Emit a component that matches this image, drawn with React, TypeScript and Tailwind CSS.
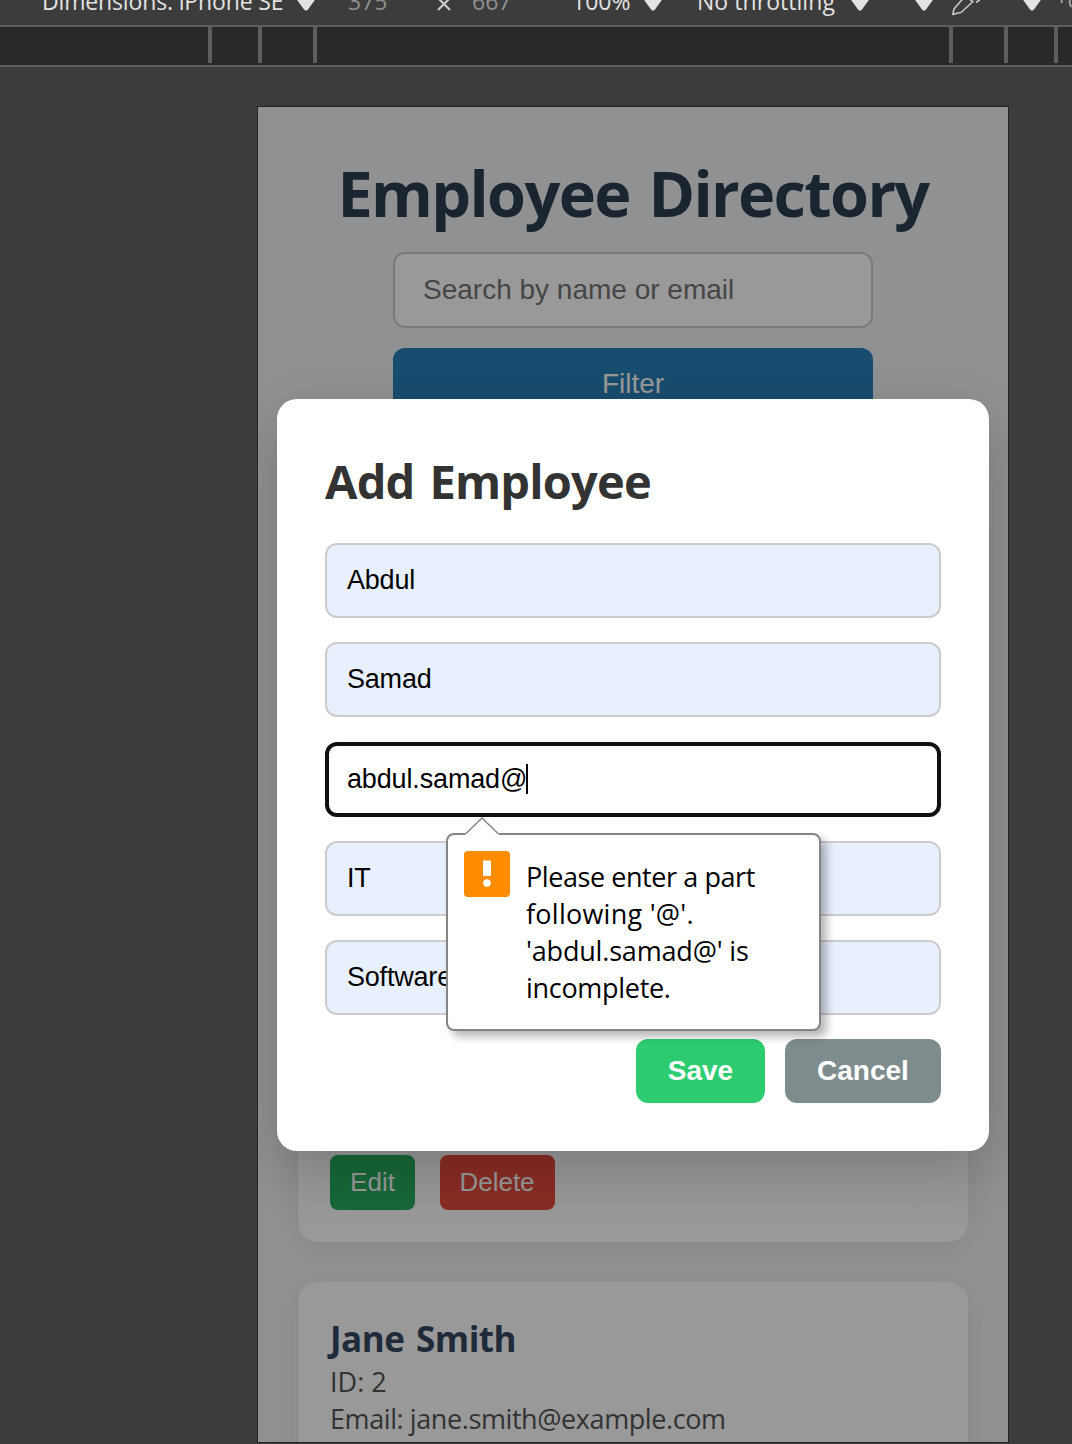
import React from "react";

function Caret({ className = "" }: { className?: string }) {
  return (
    <svg viewBox="0 0 22 14" className={`mt-2 h-[14px] w-[22px] shrink-0 fill-[#e3e3e3] ${className}`}>
      <path d="M0 0H22L13 12.600Q11 14.800 9 12.600Z" />
    </svg>
  );
}

function DeviceToolbar() {
  return (
    <div className="h-[25px] overflow-hidden bg-[#3c3c3c]">
      <div className="-mt-6 flex h-12 items-center text-[23px] leading-[48px] whitespace-nowrap text-[#e3e3e3]">
        <span className="ml-[42px] w-[253px] shrink-0 pt-px tracking-[-0.15px]">Dimensions: iPhone SE</span>
        <Caret />
        <span className="ml-[31px] w-[89px] shrink-0 pt-px text-[#8f8f8f]">375</span>
        <svg viewBox="0 0 14 14" className="mt-[7px] h-[14px] w-[14px] shrink-0 fill-none stroke-[#c7c7c7]" strokeWidth="2.200">
          <path d="M1 1 13 13M13 1 1 13" />
        </svg>
        <span className="ml-[21px] w-[100px] shrink-0 pt-px text-[#8f8f8f]">667</span>
        <span className="w-[70px] shrink-0 pt-px">100%</span>
        <Caret />
        <span className="ml-[33px] w-[152px] shrink-0 pt-px tracking-[0.05px]">No throttling</span>
        <Caret />
        <Caret className="ml-[42px]" />
        <svg viewBox="0 0 30 32" className="ml-4 h-8 w-[30px] shrink-0 fill-none stroke-[#c7c7c7]" strokeWidth="1.6" strokeLinejoin="round">
          <path d="M1.8 30.500 3 25 15 11 20 16.500 22 17.500 10 28.500 7 29ZM25 18.500 29 15.500" />
        </svg>
        <Caret className="ml-[40px]" />
        <svg viewBox="0 0 16 32" className="ml-4 h-8 w-4 shrink-0 fill-none stroke-[#a0a0a0]" strokeWidth="2">
          <path d="M2.500 14Q2.500 17 3 19M11.500 14Q9.500 20 12.500 23" />
        </svg>
      </div>
    </div>
  );
}

function Tick({ className }: { className: string }) {
  return <span className={`h-9 w-1 shrink-0 bg-[#5e5e5e] ${className}`} />;
}

function Ruler() {
  return (
    <div className="flex h-[42px] border-y-2 border-[#5e5e5e] bg-[#28292b]">
      <Tick className="ml-[208px]" />
      <Tick className="ml-[46px]" />
      <Tick className="ml-[51px]" />
      <Tick className="ml-[632px]" />
      <Tick className="ml-[51px]" />
      <Tick className="ml-[46px]" />
    </div>
  );
}

const cardClass = "w-[670px] rounded-[20px] bg-white px-8 shadow-[0_8px_30px_rgba(0,0,0,0.07)]";
const arial = "font-['Liberation_Sans',Arial,sans-serif]";

function Directory() {
  return (
    <div className="flex h-full flex-col items-center bg-[#f0f2f5] pt-[50px]">
      <h1 className="text-[63px] leading-[72px] font-bold tracking-[-1.65px] [word-spacing:4px] whitespace-nowrap text-[#2c3e50]">
        Employee Directory
      </h1>
      <div className={`mt-[23px] flex h-[76px] w-[480px] shrink-0 items-center rounded-xl border-2 border-[#ccc] bg-white px-7 text-[28px] text-[#757575] ${arial}`}>
        Search by name or email
      </div>
      <div className={`mt-5 flex h-[70px] w-[480px] shrink-0 items-center justify-center rounded-xl bg-[#2980b9] pt-[2px] text-[28px] text-white ${arial}`}>
        Filter
      </div>
      <div className={`mt-[82px] flex h-[742px] shrink-0 items-end gap-[25px] pb-8 text-[26px] text-white ${cardClass} ${arial}`}>
        <span className="flex h-[55px] w-[85px] items-center justify-center rounded-lg bg-[#27ae60]">Edit</span>
        <span className="flex h-[55px] w-[115px] items-center justify-center rounded-lg bg-[#e74c3c] pr-px">Delete</span>
      </div>
      <div className={`mt-10 h-[400px] shrink-0 pt-[33px] text-[27px] leading-[37px] text-[#555] ${cardClass}`}>
        <h3 className="text-[35px] leading-[48px] font-bold tracking-[-0.5px] [word-spacing:3px] text-[#34495e]">Jane Smith</h3>
        <p>ID: 2</p>
        <p className="tracking-[-0.41px]">Email: jane.smith@example.com</p>
      </div>
    </div>
  );
}

function Field({ value, className = "" }: { value: string; className?: string }) {
  return (
    <div className={`flex h-[75px] shrink-0 items-center rounded-xl border-2 border-[#ccc] bg-[#e8f0fe] px-5 text-[27px] tracking-[-0.2px] text-black ${arial} ${className}`}>
      {value}
    </div>
  );
}

function ValidationBubble() {
  return (
    <div className="absolute top-[91px] left-[121px] z-10 flex h-[198px] w-[375px] rounded-lg border-2 border-[#848484] bg-white px-4 shadow-[6px_6px_9px_rgba(0,0,0,0.28)]">
      <svg viewBox="0 0 36 18" className="absolute -top-[18px] left-4 h-[18px] w-9">
        <path d="M1 18V17L18 1 35 17V18Z" fill="#fff" />
        <path d="M1.500 17 18 1 34.500 17" fill="none" stroke="#848484" strokeWidth="1.400" />
      </svg>
      <svg viewBox="0 0 46 46" className="mt-4 h-[46px] w-[46px] shrink-0">
        <rect width="46" height="46" rx="4" fill="#ff8c00" />
        <rect x="19" y="9.500" width="8" height="15.500" fill="#fff" />
        <circle cx="23" cy="32" r="3.800" fill="#fff" />
      </svg>
      <div className="mt-[23px] ml-4 text-[27px] leading-[37px] whitespace-nowrap text-black">
        <p className="tracking-[-0.430px]">Please enter a part</p>
        <p className="tracking-[0.250px]">following '@'.</p>
        <p className="tracking-[-0.180px]">'abdul.samad@' is</p>
        <p className="tracking-[-0.300px]">incomplete.</p>
      </div>
    </div>
  );
}

function AddEmployeeDialog() {
  return (
    <div className="flex h-[752px] w-[712px] flex-col rounded-[20px] bg-white p-12 shadow-[0_20px_60px_rgba(0,0,0,0.2)]">
      <h2 className="mt-px text-[47px] leading-[66px] font-bold tracking-[-0.8px] [word-spacing:3.500px] text-[#333]">Add Employee</h2>
      <Field value="Abdul" className="mt-[29px]" />
      <Field value="Samad" className="mt-6" />
      <div className="relative mt-[25px]">
        <div className={`flex h-[75px] items-center rounded-xl border-4 border-[#101010] bg-white px-[18px] text-[27px] tracking-[-0.15px] text-black ${arial}`}>
          <span className="w-[179px]">abdul.samad@</span>
          <span className="mb-px h-[30px] w-[2px] bg-black" />
        </div>
        <ValidationBubble />
      </div>
      <Field value="IT" className="mt-6" />
      <Field value="Software" className="mt-6" />
      <div className={`mt-6 flex justify-end gap-5 text-[28px] font-bold text-white ${arial}`}>
        <span className="flex h-16 w-[129px] items-center justify-center rounded-xl bg-[#2ecc71]">Save</span>
        <span className="flex h-16 w-[156px] items-center justify-center rounded-xl bg-[#7f8c8d]">Cancel</span>
      </div>
    </div>
  );
}

export default function App() {
  return (
    <div className="h-[1444px] w-[1072px] overflow-hidden bg-[#3c3c3c] font-['Open_Sans','Noto_Sans',sans-serif]">
      <DeviceToolbar />
      <Ruler />
      <div className="relative mt-[39px] ml-[257px] h-[1337px] w-[752px] overflow-hidden border border-[#242424]">
        <Directory />
        <div className="absolute inset-0 flex justify-center bg-black/40 pt-[292px]">
          <AddEmployeeDialog />
        </div>
      </div>
    </div>
  );
}
